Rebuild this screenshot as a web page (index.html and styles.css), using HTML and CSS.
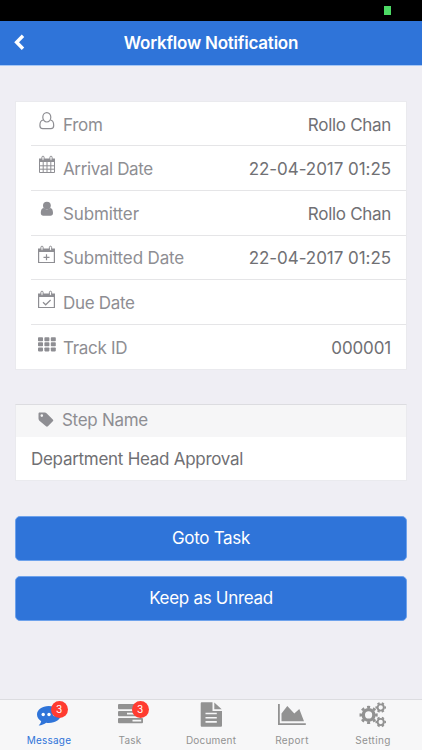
FILE: index.html
```
<!DOCTYPE html>
<html lang="en">
<head>
<meta charset="utf-8">
<title>Workflow Notification</title>
<link rel="stylesheet" href="styles.css">
</head>
<body>
<div class="status"><span class="battery"></span></div>
<header class="nav">
  <svg class="back" width="11" height="17" viewBox="0 0 11 17"><path d="M9 1.7 2.6 8.2 9 14.7" fill="none" stroke="#fff" stroke-width="3.4"/></svg>
  <h1 class="title">Workflow Notification</h1>
</header>
<main class="content">
  <section class="card details">
    <div class="row">
      <svg class="icon" width="18" height="20" viewBox="0 0 18 20"><g fill="none" stroke="#8e8e93" stroke-width="1.2"><ellipse cx="8.8" cy="6.3" rx="4" ry="4.7"/><path d="M5.3 9C2.7 9.2 1.9 11.7 1.9 14.4c0 2.2 1.1 3.2 2.8 3.2h8.2c1.7 0 2.8-1 2.8-3.2 0-2.7-.8-5.2-3.4-5.4"/></g></svg>
      <span class="label from">From</span><span class="value name">Rollo Chan</span>
    </div>
    <div class="row">
      <svg class="icon" width="18" height="20" viewBox="0 0 18 20"><path d="M1 3.500h16v3.5H1z" fill="#8e8e93"/><g fill="none" stroke="#8e8e93"><path d="M1.5 4.5h15v13h-15zM5.2 7v10.5M9 7v10.5M12.8 7v10.5M1.5 10.8h15M1.5 14.2h15"/></g><g fill="#fff" stroke="#8e8e93"><rect x="3.9" y="1.2" width="2.2" height="4.2" rx="1.1"/><rect x="11.9" y="1.2" width="2.2" height="4.2" rx="1.1"/></g></svg>
      <span class="label arrival">Arrival Date</span><span class="value date">22-04-2017 01:25</span>
    </div>
    <div class="row">
      <svg class="icon" width="18" height="20" viewBox="0 0 18 20"><g fill="#8e8e93"><circle cx="8.900" cy="5.600" r="3.900"/><path d="M5.6 8C3.600 8.100 2.800 10.500 2.800 13.100c0 1.700 1 2.700 2.500 2.700h7.200c1.500 0 2.500-1 2.500-2.700 0-2.600-.8-5-2.800-5.100-1.900 1.900-4.700 1.900-6.600 0z"/></g></svg>
      <span class="label submitter">Submitter</span><span class="value name">Rollo Chan</span>
    </div>
    <div class="row">
      <svg class="icon" width="18" height="20" viewBox="0 0 18 20"><path d="M0 3.500h17v3.5H0z" fill="#8e8e93"/><path d="M.6 4.5h15.8v13H.6zM8.5 9.3v6M5.5 12.3h6" fill="none" stroke="#8e8e93" stroke-width="1.2"/><g fill="#fff" stroke="#8e8e93"><rect x="2.9" y="1.2" width="2.2" height="4.2" rx="1.1"/><rect x="11.4" y="1.2" width="2.2" height="4.2" rx="1.1"/></g></svg>
      <span class="label submitted">Submitted Date</span><span class="value date">22-04-2017 01:25</span>
    </div>
    <div class="row">
      <svg class="icon" width="18" height="20" viewBox="0 0 18 20"><path d="M0 3.500h17v3.5H0z" fill="#8e8e93"/><path d="M.6 4.5h15.8v13H.6zM5 12.2l2.7 2.6L12.6 10" fill="none" stroke="#8e8e93" stroke-width="1.2"/><g fill="#fff" stroke="#8e8e93"><rect x="2.9" y="1.2" width="2.2" height="4.2" rx="1.1"/><rect x="11.4" y="1.2" width="2.2" height="4.2" rx="1.1"/></g></svg>
      <span class="label due">Due Date</span>
    </div>
    <div class="row">
      <svg class="icon" width="18" height="20" viewBox="0 0 18 20"><g fill="#8e8e93"><rect x="0" y="2.2" width="5" height="4" rx=".8"/><rect x="6.4" y="2.2" width="5" height="4" rx=".8"/><rect x="12.8" y="2.2" width="5" height="4" rx=".8"/><rect x="0" y="7.3" width="5" height="4" rx=".8"/><rect x="6.4" y="7.3" width="5" height="4" rx=".8"/><rect x="12.8" y="7.3" width="5" height="4" rx=".8"/><rect x="0" y="12.4" width="5" height="4" rx=".8"/><rect x="6.4" y="12.4" width="5" height="4" rx=".8"/><rect x="12.8" y="12.4" width="5" height="4" rx=".8"/></g></svg>
      <span class="label track">Track ID</span><span class="value number">000001</span>
    </div>
  </section>
  <section class="card step">
    <div class="step-head">
      <svg class="tag" width="16" height="16" viewBox="0 0 16 16"><path fill="#8e8e93" fill-rule="evenodd" d="M.5 1.7C.5 1 1 .5 1.7.5h5c.7 0 1.6.4 2.1.9l6 6c.6.6.6 1.3 0 1.9l-4.900 5c-.6.5-1.300.5-1.900 0L1.400 8.700C.9 8.200.5 7.300.5 6.600zM3.800 2.300a1.300 1.300 0 1 0 0 2.600 1.300 1.300 0 0 0 0-2.600z"/></svg>
      <span class="label step-name">Step Name</span>
    </div>
    <div class="step-body"><span class="department">Department Head Approval</span></div>
  </section>
  <button class="button"><span class="goto">Goto Task</span></button>
  <button class="button"><span class="keep">Keep as Unread</span></button>
</main>
<nav class="tabs">
  <a class="tab active">
    <svg width="32" height="30" viewBox="0 0 32 30"><path fill="#2f74d9" d="M15.800 6C9 6 4 9.800 4 14.600c0 2.800 1.600 5.100 4.200 6.700-.4 2-1.400 3.100-2.500 4.100 3.100-.1 5.600-1.300 7.500-2.700.8.200 1.700.2 2.600.2 6.800 0 12.200-3.600 12.200-8.300S22.600 6 15.800 6z"/><g fill="#fff"><circle cx="10.200" cy="14.500" r="1.700"/><circle cx="16" cy="14.500" r="1.700"/><circle cx="21.600" cy="14.500" r="1.700"/></g></svg>
    <span class="badge">3</span><span class="tab-label message">Message</span>
  </a>
  <a class="tab">
    <svg width="32" height="30" viewBox="0 0 32 30"><g fill="#929292"><rect x="4" y="4" width="25" height="5.300" rx="1"/><rect x="4" y="11" width="25" height="5.300" rx="1"/><rect x="4" y="18" width="25" height="5.300" rx="1"/></g><g fill="#f7f7f8"><path d="M13 12.700h14v1.900H13zM18.500 19.700h8.700v1.900h-8.700z"/></g></svg>
    <span class="badge">3</span><span class="tab-label task">Task</span>
  </a>
  <a class="tab">
    <svg width="32" height="30" viewBox="0 0 32 30"><path fill="#929292" fill-rule="evenodd" d="M7 2.200h10.500v8.800H27v14.500c0 .8-.5 1.300-1.300 1.300H7c-.8 0-1.300-.5-1.300-1.300v-22c0-.8.5-1.300 1.300-1.300zM10.500 12.700v1.600h11.300v-1.600zm0 4.200v1.600h11.300v-1.600zm0 4.200v1.600h11.300v-1.600zM19.300 2.500l7.400 6.700h-7.400z"/></svg>
    <span class="tab-label document">Document</span>
  </a>
  <a class="tab">
    <svg width="32" height="30" viewBox="0 0 32 30"><path fill="#929292" d="M2 4h1.800v19.200h26V25H2zM5.500 13.500 11.300 6l7 7.500 5-4.500 4.700 12.300H5.500z"/></svg>
    <span class="tab-label report">Report</span>
  </a>
  <a class="tab">
    <svg width="32" height="30" viewBox="0 0 32 30"><g fill="none" stroke="#929292"><circle cx="11.600" cy="14.900" r="5.300" stroke-width="3.400"/><circle cx="11.600" cy="14.900" r="7.800" stroke-width="2.600" pathLength="64" stroke-dasharray="4 4" stroke-dashoffset="2"/><circle cx="23.700" cy="7.500" r="3.100" stroke-width="1.900"/><circle cx="23.700" cy="7.500" r="4.500" stroke-width="1.600" pathLength="48" stroke-dasharray="4 4" stroke-dashoffset="2"/><circle cx="23.700" cy="22" r="3.100" stroke-width="1.900"/><circle cx="23.700" cy="22" r="4.500" stroke-width="1.600" pathLength="48" stroke-dasharray="4 4" stroke-dashoffset="2"/></g></svg>
    <span class="tab-label setting">Setting</span>
  </a>
</nav>
</body>
</html>
```
FILE: styles.css
```
* { box-sizing: border-box; }
body { margin: 0; width: 422px; height: 750px; display: flex; flex-direction: column; overflow: hidden; background: #efeef4; font-family: Inter, sans-serif; font-size: 17px; color: #707074; }
span, h1 { white-space: nowrap; }
.status { height: 20.5px; flex: none; display: flex; justify-content: flex-end; padding: 6px 31px 0 0; background: #000; }
.battery { width: 7px; height: 9px; background: #4cd964; }
.nav { height: 45px; flex: none; display: flex; align-items: center; background: #2f74d9; border-bottom: 1px solid #a6c7f5; color: #fff; }
.back { width: 11px; margin: -1px 0 0 14px; }
.title { flex: 1; margin: 1px 25px 0 0; text-align: center; font-size: 17px; font-weight: 600; letter-spacing: -0.23px; }
.content { flex: 1; padding: 35.5px 15px 0; }
.card { background: #fff; border: 1px solid #eaeaee; }
.details { height: 269px; padding-left: 15px; display: grid; grid-template-rows: 44px repeat(5, 44.75px); }
.row { display: flex; align-items: center; padding: 2px 15px 0 0; border-bottom: 1px solid #e5e5e7; }
.row:last-child { border-bottom: 0; }
.icon { flex: none; margin: -7px 7px 0; }
.label { color: #8e8e93; font-size: 17px; letter-spacing: -.3px; }
.value { margin-left: auto; }
.arrival { letter-spacing: -.37px; }
.submitted, .submitter { letter-spacing: -.15px; }
.name { letter-spacing: -.3px; }
.date { letter-spacing: -.05px; }
.number { letter-spacing: -.15px; }
.step { height: 77px; margin-top: 34px; border-top-color: #dcdce0; }
.step-head { height: 32px; display: flex; align-items: center; padding: 0 0 2px 22px; gap: 8px; background: #f6f6f7; }
.step-body { height: 43px; display: flex; align-items: center; padding-left: 15px; letter-spacing: -.28px; }
.button { display: flex; align-items: center; justify-content: center; width: 100%; height: 45px; margin-top: 14.5px; padding: 0 0 1px; border: 1px solid #6ea2ec; border-radius: 5px; background: #2f74d9; color: #fff; font: 17px Inter, sans-serif; letter-spacing: -.3px; }
.step + .button { margin-top: 35px; }
.tabs { height: 51px; flex: none; display: grid; grid-template-columns: repeat(5, 81px); justify-content: center; background: #f7f7f8; border-top: 1px solid #dcdce0; }
.tab { position: relative; display: flex; flex-direction: column; align-items: center; color: #929292; font-size: 10px; }
.tab svg { flex: none; }
.tab-label { line-height: 12px; margin-top: 4px; letter-spacing: .2px; }
.setting, .report { letter-spacing: .35px; }
.active { color: #2f74d9; }
.badge { position: absolute; left: 42px; top: 1px; width: 17px; height: 17px; border-radius: 50%; background: #ff3b30; color: #fff; font-size: 10px; line-height: 17px; text-align: center; }
```
